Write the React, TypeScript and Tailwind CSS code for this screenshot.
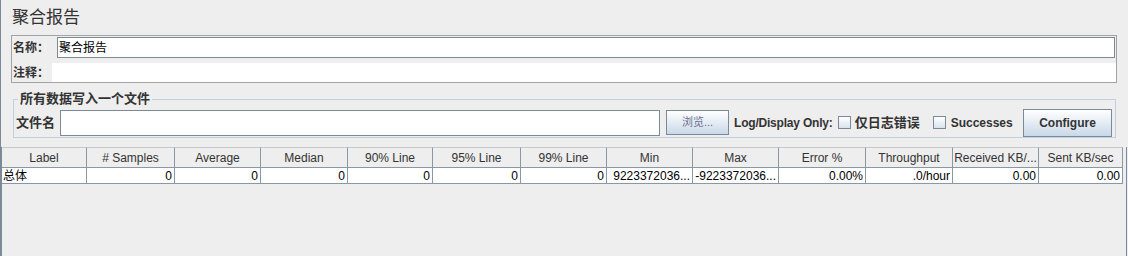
import React from "react";

const columns = [
    { name: "Label", value: "总体", left: true },
    { name: "# Samples", value: "0" },
    { name: "Average", value: "0" },
    { name: "Median", value: "0" },
    { name: "90% Line", value: "0" },
    { name: "95% Line", value: "0" },
    { name: "99% Line", value: "0" },
    { name: "Min", value: "9223372036..." },
    { name: "Max", value: "-9223372036..." },
    { name: "Error %", value: "0.00%" },
    { name: "Throughput", value: ".0/hour" },
    { name: "Received KB/...", value: "0.00" },
    { name: "Sent KB/sec", value: "0.00" },
];

function Checkbox() {
    return (
        <span className="inline-block shrink-0 w-[13px] h-[13px] border border-[#7a8a99] bg-gradient-to-b from-white to-[#d8e2ec]" />
    );
}

export default function App() {
    return (
        <div
            className="w-[1128px] h-[256px] bg-[#eeeeee] border-l border-[#7a8a99] flex flex-col text-[#333333] overflow-hidden"
            style={{ fontFamily: '"Liberation Sans", "Noto Sans CJK SC", sans-serif' }}
        >
            {/* title */}
            <div className="h-[35px] pl-[11px] pt-[7px] text-[17px] leading-[22px]">聚合报告</div>

            {/* name / comments */}
            <div className="ml-[10px] mr-[11px] h-[48px] border border-[#a3a3a3] flex flex-col">
                <div className="h-[23px] flex items-center">
                    <span className="w-[45px] pl-[1px] text-[12px] font-bold">名称：</span>
                    <div className="flex-1 h-[21px] bg-white border border-[#7a8a99] mr-[1px] pl-[1px] flex items-center text-[12px] text-black">
                        聚合报告
                    </div>
                </div>
                <div className="h-[4px]" />
                <div className="flex-1 flex items-center">
                    <span className="w-[40px] pl-[1px] text-[12px] font-bold">注释：</span>
                    <div className="flex-1 h-full bg-white" />
                </div>
            </div>

            {/* write results to file */}
            <fieldset className="ml-[12px] mr-[12px] mt-[9px] border border-[#bfd0e2] px-[2px]">
                <legend className="ml-[2px] px-[2px] text-[13px] font-bold leading-[14px]">所有数据写入一个文件</legend>
                <div className="flex items-center h-[31px] pt-[2px] whitespace-nowrap">
                    <span className="w-[44px] shrink-0 text-[13px] font-bold">文件名</span>
                    <div className="w-[600px] shrink-0 h-[26px] bg-white border border-[#7a8a99]" />
                    <button className="ml-[6px] shrink-0 w-[63px] h-[25px] border border-[#7a8a99] bg-gradient-to-b from-white to-[#c9d8e8] text-[11px] text-[#6e6e92]">
                        浏览...
                    </button>
                    <span className="ml-[5px] shrink-0 text-[12px] font-bold tracking-[-0.2px]">Log/Display Only:</span>
                    <span className="ml-[5px] flex items-center">
                        <Checkbox />
                    </span>
                    <span className="ml-[4px] shrink-0 text-[13px] font-bold">仅日志错误</span>
                    <span className="ml-[13px] flex items-center">
                        <Checkbox />
                    </span>
                    <span className="ml-[5px] shrink-0 text-[12px] font-bold">Successes</span>
                    <button className="ml-auto shrink-0 w-[89px] h-[28px] border border-[#7a8a99] bg-gradient-to-b from-white to-[#c9d8e8] text-[12px] font-bold">
                        Configure
                    </button>
                    <span className="w-[1px] shrink-0" />
                </div>
            </fieldset>

            {/* results table */}
            <div className="mt-[9px] flex-1 border-l border-r border-[#7a8a99] mr-[1px]">
                <div className="grid grid-cols-[85px_88px_86px_87px_85px_88px_86px_86px_86px_87px_87px_86px_84px] text-[12px]">
                    {columns.map((col) => (
                        <div
                            key={col.name}
                            className="h-[21px] flex items-center justify-center border-t border-t-[#c8c8c8] border-r border-b border-[#8a97a5] bg-[#eeeeee] whitespace-nowrap"
                        >
                            {col.name}
                        </div>
                    ))}
                    {columns.map((col) => (
                        <div
                            key={col.name + "-v"}
                            className={`h-[16px] flex items-center bg-white border-r border-b border-[#8a97a5] whitespace-nowrap overflow-hidden text-black ${col.left ? "justify-start pl-[1px]" : "justify-end pr-[2px]"}`}
                        >
                            {col.value}
                        </div>
                    ))}
                </div>
            </div>
        </div>
    );
}
